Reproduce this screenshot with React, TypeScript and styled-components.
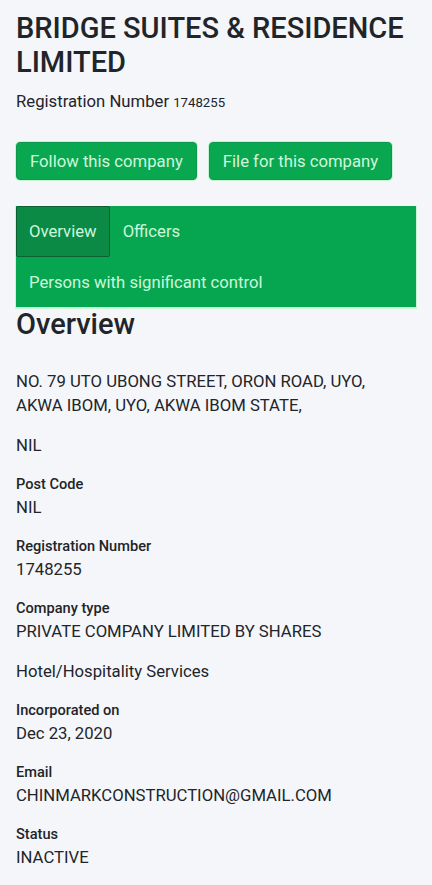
import styled, { createGlobalStyle } from "styled-components";

const GlobalStyle = createGlobalStyle`
  body {
    margin: 0;
    background-color: #f5f6fa;
    font-family: Roboto, "Liberation Sans", sans-serif;
    color: #212529;
  }
`

interface TabProps {
  active?: boolean;
}

const details = [
  { value: "NO. 79 UTO UBONG STREET, ORON ROAD, UYO, AKWA IBOM, UYO, AKWA IBOM STATE," },
  { value: "NIL" },
  { label: "Post Code", value: "NIL" },
  { label: "Registration Number", value: "1748255" },
  { label: "Company type", value: "PRIVATE COMPANY LIMITED BY SHARES" },
  { value: "Hotel/Hospitality Services" },
  { label: "Incorporated on", value: "Dec 23, 2020" },
  { label: "Email", value: "CHINMARKCONSTRUCTION@GMAIL.COM" },
  { label: "Status", value: "INACTIVE" },
]

function App() {
  return (
    <>
      <GlobalStyle />
      <Page>
        <Title>BRIDGE SUITES &amp; RESIDENCE LIMITED</Title>
        <RegLine>
          Registration Number <RegNumber>1748255</RegNumber>
        </RegLine>

        <ButtonRow>
          <Button>Follow this company</Button>
          <Button>File for this company</Button>
        </ButtonRow>

        <Tabs>
          <Tab active>Overview</Tab>
          <Tab>Officers</Tab>
          <Tab>Persons with significant control</Tab>
        </Tabs>

        <SectionHeading>Overview</SectionHeading>

        <DetailList>
          {details.map((item, i) => (
            <Detail key={i}>
              {item.label && <Label>{item.label}</Label>}
              <Value>{item.value}</Value>
            </Detail>
          ))}
        </DetailList>
      </Page>
    </>
  )
}

const Page = styled.div`
  padding: 11px 16px 16px;
  display: flex;
  flex-direction: column;
  align-items: flex-start;
`

const Title = styled.h1`
  margin: 0;
  font-size: 29px;
  line-height: 34px;
  font-weight: 500;
  color: #212529;
`

const RegLine = styled.div`
  margin-top: 11px;
  font-size: 16.7px;
  line-height: 24px;
`

const RegNumber = styled.small`
  font-size: 13.2px;
`

const ButtonRow = styled.div`
  margin-top: 27px;
  display: flex;
  gap: 12px;
`

const Button = styled.button`
  height: 38px;
  padding: 0 13px;
  border: 1px solid #0b9a4c;
  border-radius: 4px;
  background-color: #0aa751;
  color: #cff8db;
  font-family: Roboto, "Liberation Sans", sans-serif;
  font-size: 16.7px;
  box-shadow: 0 0 0 1px #c6f3d4;
`

const Tabs = styled.nav`
  margin-top: 26px;
  width: 100%;
  box-sizing: border-box;
  display: flex;
  flex-wrap: wrap;
  background-color: #06a650;
  box-shadow: 0 1px 0 1px #c8f5d6;
`

const Tab = styled.div<TabProps>`
  box-sizing: border-box;
  height: 51px;
  padding: 0 12px;
  display: flex;
  align-items: center;
  font-size: 16.7px;
  color: #cdf7da;
  border-radius: 2px;
  background-color: ${(p) => (p.active ? "#0a8a45" : "transparent")};
  border: 1px solid ${(p) => (p.active ? "#0b5f30" : "transparent")};

  &:last-child {
    height: 50px;
  }
`

const SectionHeading = styled.h2`
  margin: 0;
  font-size: 29px;
  line-height: 34px;
  font-weight: 500;
  color: #212529;
`

const DetailList = styled.div`
  margin-top: 29px;
  display: flex;
  flex-direction: column;
  gap: 16px;
`

const Detail = styled.div`
  display: flex;
  flex-direction: column;
`

const Label = styled.div`
  font-size: 14.6px;
  line-height: 20px;
  font-weight: 500;
  margin-bottom: 2px;
`

const Value = styled.div`
  font-size: 16.7px;
  line-height: 24px;
  padding-right: 40px;
`

export default App;
